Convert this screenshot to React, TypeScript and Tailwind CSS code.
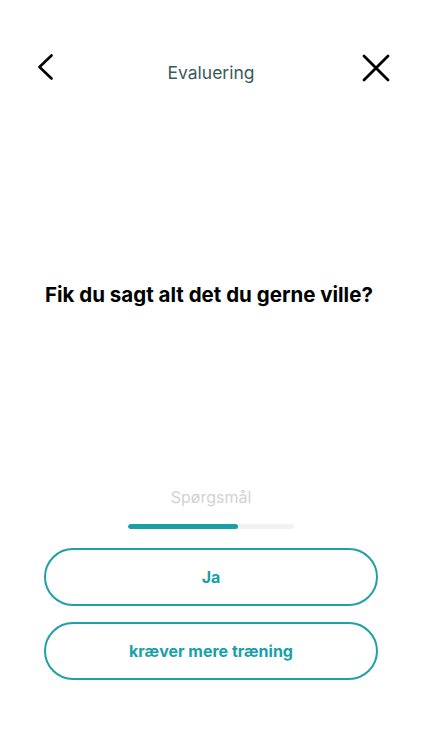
import React from "react"

const progress = 66

export default function App() {
  return (
    <div className="flex h-[750px] w-full flex-col bg-white font-['Inter',sans-serif]">
      {/* header */}
      <div className="grid grid-cols-[1fr_auto_1fr] items-start px-[32px] pt-[54px]">
        <button className="ml-[5px] justify-self-start">
          <svg width="17" height="26" viewBox="0 0 17 26" fill="none">
            <path d="M14.5 1.5 L2.5 13 L14.5 24.5" stroke="#000" strokeWidth="2.6" strokeLinecap="round" strokeLinejoin="round" />
          </svg>
        </button>
        <div className="mt-[9px] text-[17.5px] leading-5 text-[#3b5a5b]">Evaluering</div>
        <button className="justify-self-end">
          <svg width="28" height="28" viewBox="0 0 28 28" fill="none">
            <path d="M2 2 L26 26 M26 2 L2 26" stroke="#000" strokeWidth="2.8" strokeLinecap="round" />
          </svg>
        </button>
      </div>

      {/* question */}
      <div className="mt-[198px] px-[45px]">
        <h1 className="text-[20.5px] font-bold leading-7 text-black">Fik du sagt alt det du gerne ville?</h1>
      </div>

      <div className="flex-1" />

      {/* bottom */}
      <div className="flex flex-col items-center px-[44px] pb-[70px]">
        <div className="text-[16px] leading-5 text-[#d2d2d2]">Spørgsmål</div>
        <div className="mt-[17px] h-[5px] w-[166px] overflow-hidden rounded-full bg-[#f2f2f2]">
          <div className="h-full rounded-full bg-[#17a1a6]" style={{ width: `${progress}%` }} />
        </div>
        <button className="mt-[19px] flex h-[58px] w-full items-center justify-center rounded-full border-2 border-[#1fa1a6] text-[16px] font-bold text-[#17a1a6]">
          Ja
        </button>
        <button className="mt-[16px] flex h-[58px] w-full items-center justify-center rounded-full border-2 border-[#1fa1a6] text-[16px] font-bold text-[#17a1a6]">
          kræver mere træning
        </button>
      </div>
    </div>
  )
}
